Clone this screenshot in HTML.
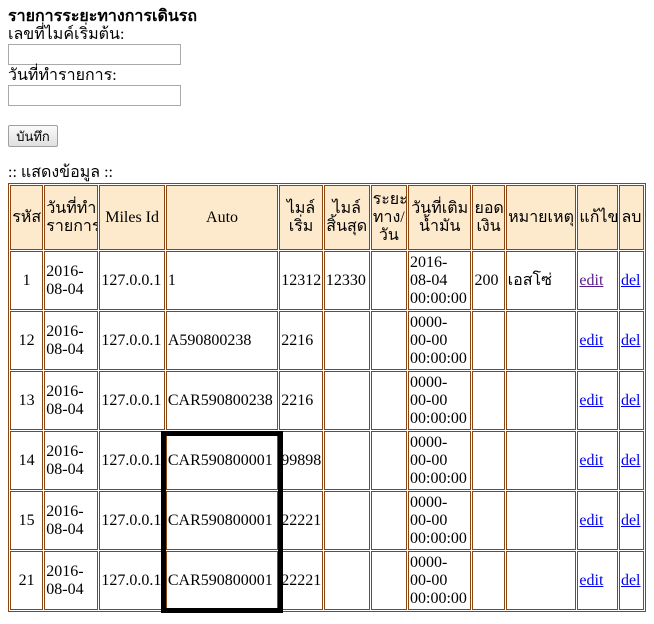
<!DOCTYPE html>
<html><head><meta charset="utf-8">
<style>
body{margin:8px;font-family:"Liberation Serif","Noto Serif CJK SC",serif;font-size:16px;color:#000;background:#fff}
h3{margin:0;font-size:16px;font-weight:bold;line-height:18px}
.lbl{line-height:18px}
input.t{display:block;width:173px;height:21px;box-sizing:border-box;border:1px solid #a9a9a9;margin:0;padding:0}
button{font-family:inherit;font-size:13px;height:22px;width:50px;padding:0;border:1px solid #a0a0a0;border-radius:2px;background:linear-gradient(#fafafa,#e0e0e0)}
table{border:1px solid #8b4513;border-spacing:1px;table-layout:fixed;position:absolute;left:8px;top:183px;width:638px}
td,th{border:1px solid #8b4513;border-style:solid;padding:0 1px;font-size:16px;line-height:18px;overflow:hidden}
th{background:#fde9cb;font-weight:normal;height:63px;text-align:center}
td{height:57px;text-align:left}
td.c{text-align:center}
a{color:#00e}
a.v{color:#551a8b}
.box{position:absolute;left:161px;top:431px;width:122px;height:182px;border:5px solid #000;box-sizing:border-box}
</style></head><body>
<h3>รายการระยะทางการเดินรถ</h3>
<div class="lbl">เลขที่ไมค์เริ่มต้น:</div>
<input class="t">
<div class="lbl" style="margin-top:2px">วันที่ทำรายการ:</div>
<input class="t">
<div style="position:absolute;left:8px;top:125px"><button>บันทึก</button></div>
<div class="lbl" style="position:absolute;left:8px;top:164px">:: แสดงข้อมูล ::</div>
<table>
<colgroup><col style="width:32px"><col style="width:52px"><col style="width:63px"><col style="width:108px"><col style="width:42px"><col style="width:44px"><col style="width:35px"><col style="width:61px"><col style="width:31px"><col style="width:68px"><col style="width:39px"><col style="width:24px"></colgroup>
<tr><th>รหัส</th><th>วันที่ทำรายการ</th><th>Miles Id</th><th>Auto</th><th>ไมล์เริ่ม</th><th>ไมล์สิ้นสุด</th><th>ระยะทาง/วัน</th><th>วันที่เติมน้ำมัน</th><th>ยอดเงิน</th><th>หมายเหตุ</th><th>แก้ไข</th><th>ลบ</th></tr>
<tr><td class="c">1</td><td>2016-<br>08-04</td><td>127.0.0.1</td><td>1</td><td>12312</td><td>12330</td><td></td><td>2016-<br>08-04<br>00:00:00</td><td>200</td><td>เอสโซ่</td><td><a class="v" href="#">edit</a></td><td><a href="#">del</a></td></tr>
<tr><td class="c">12</td><td>2016-<br>08-04</td><td>127.0.0.1</td><td>A590800238</td><td>2216</td><td></td><td></td><td>0000-<br>00-00<br>00:00:00</td><td></td><td></td><td><a href="#">edit</a></td><td><a href="#">del</a></td></tr>
<tr><td class="c">13</td><td>2016-<br>08-04</td><td>127.0.0.1</td><td>CAR590800238</td><td>2216</td><td></td><td></td><td>0000-<br>00-00<br>00:00:00</td><td></td><td></td><td><a href="#">edit</a></td><td><a href="#">del</a></td></tr>
<tr><td class="c">14</td><td>2016-<br>08-04</td><td>127.0.0.1</td><td>CAR590800001</td><td>99898</td><td></td><td></td><td>0000-<br>00-00<br>00:00:00</td><td></td><td></td><td><a href="#">edit</a></td><td><a href="#">del</a></td></tr>
<tr><td class="c">15</td><td>2016-<br>08-04</td><td>127.0.0.1</td><td>CAR590800001</td><td>22221</td><td></td><td></td><td>0000-<br>00-00<br>00:00:00</td><td></td><td></td><td><a href="#">edit</a></td><td><a href="#">del</a></td></tr>
<tr><td class="c">21</td><td>2016-<br>08-04</td><td>127.0.0.1</td><td>CAR590800001</td><td>22221</td><td></td><td></td><td>0000-<br>00-00<br>00:00:00</td><td></td><td></td><td><a href="#">edit</a></td><td><a href="#">del</a></td></tr>
</table>
<div class="box"></div>
</body></html>
